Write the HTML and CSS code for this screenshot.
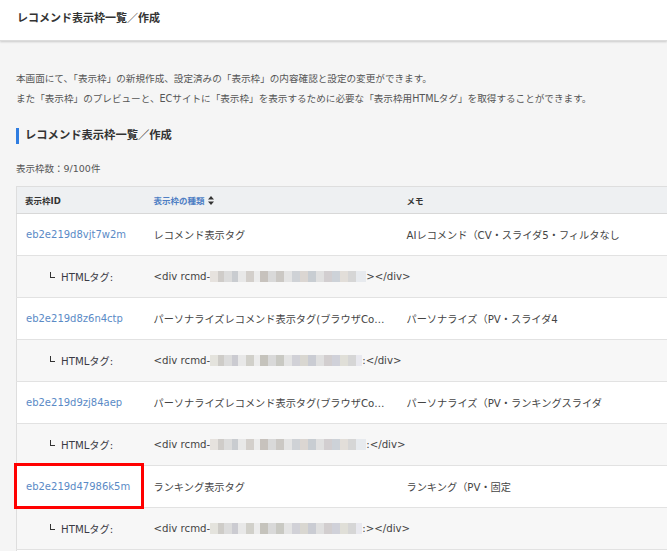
FILE: index.html
```html
<!DOCTYPE html>
<html lang="ja">
<head>
<meta charset="utf-8">
<link rel="stylesheet" href="styles.css">
</head>
<body>
<header class="topbar"><h1 class="topbar-title">レコメンド表示枠一覧／作成</h1></header>
<main class="main">
  <p class="intro">本画面にて、「表示枠」の新規作成、設定済みの「表示枠」の内容確認と設定の変更ができます。<br>また「表示枠」のプレビューと、ECサイトに「表示枠」を表示するために必要な「表示枠用HTMLタグ」を取得することができます。</p>
  <h2 class="section-title">レコメンド表示枠一覧／作成</h2>
  <p class="count">表示枠数：9/100件</p>
  <table class="frames">
    <colgroup><col class="c-id"><col class="c-type"><col class="c-memo"></colgroup>
    <thead>
      <tr>
        <th>表示枠ID</th>
        <th class="sortable">表示枠の種類 <svg class="sort" width="6" height="9" viewBox="0 0 6 9"><path d="M3 0L6 3.5H0Z M3 9L0 5.5H6Z" fill="#333"/></svg></th>
        <th>メモ</th>
      </tr>
    </thead>
    <tbody>
      <tr class="row-main">
        <td><a class="fid">eb2e219d8vjt7w2m</a></td>
        <td class="type">レコメンド表示タグ</td>
        <td>AIレコメンド（CV・スライダ5・フィルタなし</td>
      </tr>
      <tr class="row-tag">
        <td class="tag-label"><span class="corner"></span>HTMLタグ:</td>
        <td colspan="2" class="tag-code">&lt;div rcmd-<span class="blur b1"></span>&gt;&lt;/div&gt;</td>
      </tr>
      <tr class="row-main">
        <td><a class="fid">eb2e219d8z6n4ctp</a></td>
        <td class="type">パーソナライズレコメンド表示タグ(ブラウザCookie)</td>
        <td>パーソナライズ（PV・スライダ4</td>
      </tr>
      <tr class="row-tag">
        <td class="tag-label"><span class="corner"></span>HTMLタグ:</td>
        <td colspan="2" class="tag-code">&lt;div rcmd-<span class="blur b2"></span>:&lt;/div&gt;</td>
      </tr>
      <tr class="row-main">
        <td><a class="fid">eb2e219d9zj84aep</a></td>
        <td class="type">パーソナライズレコメンド表示タグ(ブラウザCookie)</td>
        <td>パーソナライズ（PV・ランキングスライダ</td>
      </tr>
      <tr class="row-tag">
        <td class="tag-label"><span class="corner"></span>HTMLタグ:</td>
        <td colspan="2" class="tag-code">&lt;div rcmd-<span class="blur b1"></span>:&lt;/div&gt;</td>
      </tr>
      <tr class="row-main">
        <td class="marked"><a class="fid">eb2e219d47986k5m</a><span class="highlight"></span></td>
        <td class="type">ランキング表示タグ</td>
        <td>ランキング（PV・固定</td>
      </tr>
      <tr class="row-tag">
        <td class="tag-label"><span class="corner"></span>HTMLタグ:</td>
        <td colspan="2" class="tag-code">&lt;div rcmd-<span class="blur b2"></span>:&gt;&lt;/div&gt;</td>
      </tr>
      <tr class="row-main row-empty">
        <td></td><td></td><td></td>
      </tr>
    </tbody>
  </table>
</main>
</body>
</html>
```

FILE: styles.css
```css
html, body {
  margin: 0;
  padding: 0;
}
body {
  background: #f5f5f5;
  font-family: "DejaVu Sans", "Noto Sans CJK JP", sans-serif;
  color: #333;
  width: 667px;
  height: 551px;
  overflow: hidden;
}
.topbar {
  height: 40px;
  background: #fff;
  box-shadow: 0 1px 2px rgba(0, 0, 0, 0.18);
  border-bottom: 1px solid #dcdcdc;
}
.topbar-title {
  margin: 0;
  padding-left: 17px;
  font-size: 11px;
  line-height: 38px;
  font-weight: bold;
  color: #333;
}
.main {
  padding: 28px 0 0 16px;
}
.intro {
  margin: 0;
  font-size: 9.6px;
  line-height: 20px;
  color: #555;
  white-space: nowrap;
}
.section-title {
  margin: 19px 0 0 0;
  border-left: 3px solid #2f7de1;
  padding-left: 6px;
  font-size: 11.3px;
  line-height: 16px;
  font-weight: bold;
  color: #333;
}
.count {
  margin: 17px 0 0 0;
  font-size: 9.5px;
  line-height: 16px;
  color: #555;
}
.frames {
  margin-top: 9px;
  width: 760px;
  table-layout: fixed;
  border-collapse: collapse;
  background: #fff;
  border-left: 1px solid #dedede;
}
.c-id { width: 129px; }
.c-type { width: 253px; }
.c-memo { width: 378px; }
.frames th {
  background: #eef0f2;
  height: 26px;
  padding: 0 8px;
  text-align: left;
  font-size: 8.5px;
  font-weight: bold;
  color: #333;
  border-top: 1px solid #dedede;
  border-bottom: 1px solid #d8d8d8;
}
.frames th.sortable {
  color: #4f7fc4;
}
.sort {
  vertical-align: -1px;
  margin-left: 1px;
}
.frames td {
  height: 41px;
  padding: 0 8px;
  font-size: 10.2px;
  color: #444;
  border-bottom: 1px solid #e2e2e2;
  white-space: nowrap;
  overflow: hidden;
  text-overflow: ellipsis;
}
.row-main td {
  background: #fff;
}
.row-tag td {
  background: #f7f7f7;
}
.fid {
  color: #5a8ac6;
  font-size: 10px;
  padding-left: 1px;
}
.tag-label {
  padding-left: 33px !important;
  color: #3a3a44 !important;
}
.corner {
  display: inline-block;
  width: 4px;
  height: 5px;
  border-left: 1px solid #333;
  border-bottom: 1px solid #333;
  vertical-align: 3px;
  margin-right: 6px;
}
.tag-code {
  overflow: visible !important;
}
.blur {
  display: inline-block;
  width: 156px;
  height: 11px;
  vertical-align: -2px;
  background:
    linear-gradient(90deg,
      #e6e2de 0 8px, #cfccc9 8px 14px, #dcdcdc 14px 22px, #c9ccd0 22px 28px,
      #e8e8e8 28px 36px, #d3cfcb 36px 44px, #ececec 44px 50px, #c7c2bd 50px 58px,
      #d9d9d9 58px 66px, #cbc8c4 66px 74px, #e4e4e4 74px 82px, #cfd2d6 82px 90px,
      #dbd6d2 90px 98px, #c8cdd2 98px 106px, #e0e0e0 106px 114px, #d2ced0 114px 122px,
      #cdd2d8 122px 130px, #e2ded9 130px 138px, #d6d6d6 138px 146px, #e7eaee 146px 156px);
}
.blur.b2 {
  width: 152px;
  filter: hue-rotate(20deg);
}
.marked {
  position: relative;
  overflow: visible !important;
}
.highlight {
  position: absolute;
  left: -3px;
  top: -3px;
  right: 2px;
  bottom: -2px;
  border: 3px solid #f00;
  pointer-events: none;
}
```
